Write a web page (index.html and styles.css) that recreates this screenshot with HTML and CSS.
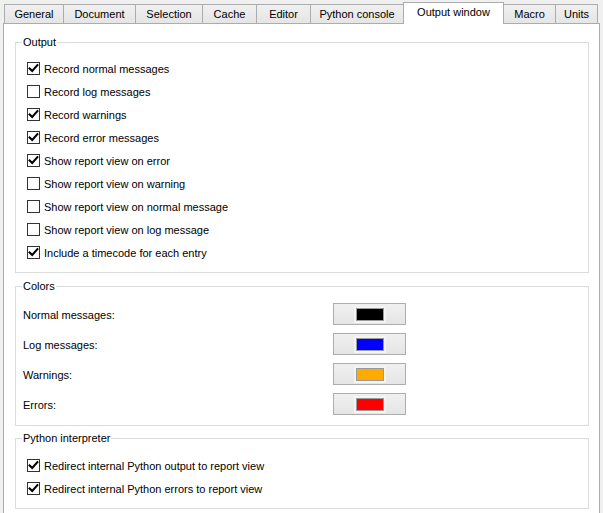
FILE: index.html
```html
<!DOCTYPE html>
<html>
<head>
<meta charset="utf-8">
<link rel="stylesheet" href="styles.css">
</head>
<body>
<div class="dialog">
  <div class="tabbar">
    <div class="tab t-general">General</div>
    <div class="tab t-document">Document</div>
    <div class="tab t-selection">Selection</div>
    <div class="tab t-cache">Cache</div>
    <div class="tab t-editor">Editor</div>
    <div class="tab t-python">Python console</div>
    <div class="tab tab-active t-output">Output window</div>
    <div class="tab t-macro">Macro</div>
    <div class="tab t-units">Units</div>
  </div>
  <div class="pane">
    <fieldset class="group">
      <legend>Output</legend>
      <div class="group-body body-output">
        <div class="check-row"><span class="box"><svg viewBox="0 0 11 11"><path d="M1.6 5.4 L4.2 8 L9.4 2.2" /></svg></span><span>Record normal messages</span></div>
        <div class="check-row"><span class="box"></span><span>Record log messages</span></div>
        <div class="check-row"><span class="box"><svg viewBox="0 0 11 11"><path d="M1.6 5.4 L4.2 8 L9.4 2.2" /></svg></span><span>Record warnings</span></div>
        <div class="check-row"><span class="box"><svg viewBox="0 0 11 11"><path d="M1.6 5.4 L4.2 8 L9.4 2.2" /></svg></span><span>Record error messages</span></div>
        <div class="check-row"><span class="box"><svg viewBox="0 0 11 11"><path d="M1.6 5.4 L4.2 8 L9.4 2.2" /></svg></span><span>Show report view on error</span></div>
        <div class="check-row"><span class="box"></span><span>Show report view on warning</span></div>
        <div class="check-row"><span class="box"></span><span>Show report view on normal message</span></div>
        <div class="check-row"><span class="box"></span><span>Show report view on log message</span></div>
        <div class="check-row"><span class="box"><svg viewBox="0 0 11 11"><path d="M1.6 5.4 L4.2 8 L9.4 2.2" /></svg></span><span>Include a timecode for each entry</span></div>
      </div>
    </fieldset>
    <fieldset class="group">
      <legend>Colors</legend>
      <div class="group-body body-colors">
        <span class="color-label">Normal messages:</span>
        <div class="color-btn"><span class="swatch sw-black"></span></div>
        <span class="color-label">Log messages:</span>
        <div class="color-btn"><span class="swatch sw-blue"></span></div>
        <span class="color-label">Warnings:</span>
        <div class="color-btn"><span class="swatch sw-orange"></span></div>
        <span class="color-label">Errors:</span>
        <div class="color-btn"><span class="swatch sw-red"></span></div>
      </div>
    </fieldset>
    <fieldset class="group group-python">
      <legend>Python interpreter</legend>
      <div class="group-body body-python">
        <div class="check-row"><span class="box"><svg viewBox="0 0 11 11"><path d="M1.6 5.4 L4.2 8 L9.4 2.2" /></svg></span><span>Redirect internal Python output to report view</span></div>
        <div class="check-row"><span class="box"><svg viewBox="0 0 11 11"><path d="M1.6 5.4 L4.2 8 L9.4 2.2" /></svg></span><span>Redirect internal Python errors to report view</span></div>
      </div>
    </fieldset>
  </div>
</div>
</body>
</html>
```

FILE: styles.css
```css
html, body {
  margin: 0;
  padding: 0;
  background: #f0f0f0;
  overflow: hidden;
}
body {
  font-family: "Liberation Sans", Arial, sans-serif;
  font-size: 11px;
  color: #000;
}
.dialog {
  padding: 2px 0 0 3px;
  width: 597px;
}
.tabbar {
  display: flex;
  align-items: flex-end;
  height: 21px;
  padding-left: 1px;
}
.tab {
  box-sizing: border-box;
  height: 19px;
  border: 1px solid #acacac;
  border-bottom: none;
  background: linear-gradient(#f0f0f0, #e5e5e5);
  display: flex;
  align-items: center;
  justify-content: center;
  margin-left: -1px;
  padding-bottom: 1px;
  white-space: nowrap;
}
.tab:first-child { margin-left: 0; }
.tab-active {
  position: relative;
  z-index: 1;
  height: 22px;
  margin-bottom: -1px;
  background: #fff;
  padding-bottom: 4px;
}
.t-general { width: 60px; }
.t-document { width: 73px; }
.t-selection { width: 68px; }
.t-cache { width: 55px; }
.t-editor { width: 55px; }
.t-python { width: 94px; }
.t-output { width: 101px; }
.t-macro { width: 53px; }
.t-units { width: 43px; }

.pane {
  box-sizing: border-box;
  border: 1px solid #acacac;
  background: #fff;
  height: 500px;
  padding: 12px 10px 0 11px;
  display: flex;
  flex-direction: column;
  gap: 7px;
}
.group {
  margin: 0;
  border: 1px solid #dcdcdc;
  min-width: 0;
  padding: 0;
}
.group-python {
  margin-top: -1px;
}
.group legend {
  padding: 0 1px;
  margin-left: 6px;
  line-height: 13px;
  font-size: 11px;
}
.body-output {
  padding: 8px 0 8px 11px;
}
.body-python {
  padding: 9px 0 8px 11px;
}
.body-colors {
  padding: 6px 0 6px 7px;
  display: grid;
  grid-template-columns: 310px 73px;
  grid-auto-rows: 30px;
  align-items: center;
}
.check-row {
  display: flex;
  align-items: center;
  height: 23px;
  gap: 4px;
}
.box {
  box-sizing: border-box;
  width: 13px;
  height: 13px;
  border: 1px solid #333;
  background: #fff;
  display: flex;
  flex: none;
}
.box svg {
  width: 11px;
  height: 11px;
}
.box path {
  fill: none;
  stroke: #000;
  stroke-width: 2.1;
  stroke-linecap: square;
}
.color-label {
  padding-top: 2px;
}
.color-btn {
  box-sizing: border-box;
  width: 73px;
  height: 22px;
  border: 1px solid #adadad;
  background: linear-gradient(#f0f0f0, #e5e5e5);
  display: flex;
  align-items: center;
  justify-content: center;
}
.swatch {
  box-sizing: border-box;
  width: 28px;
  height: 13px;
  border: 1px solid #9a9a9a;
  box-shadow: 0 0 0 2px #f4f4f4;
}
.sw-black { background: #000; }
.sw-blue { background: #0000ff; }
.sw-orange { background: #ffaa00; }
.sw-red { background: #ff0000; }
```
